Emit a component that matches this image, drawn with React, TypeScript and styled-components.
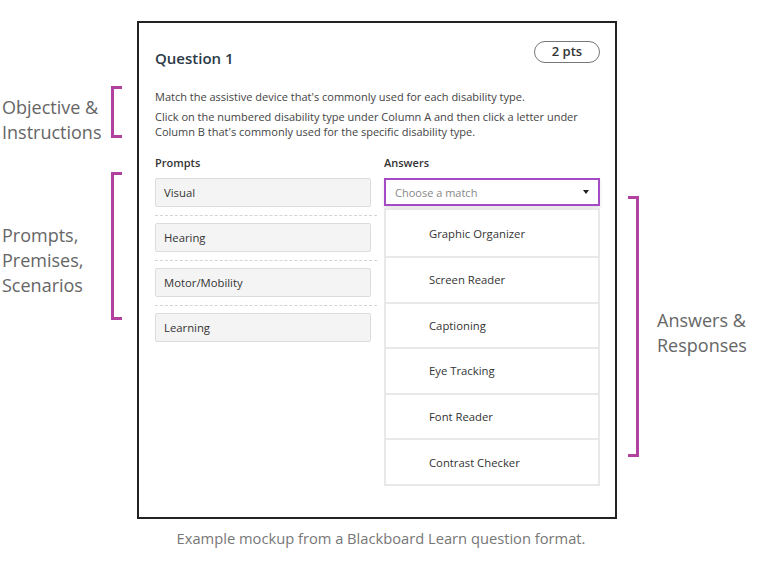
import styled, { createGlobalStyle } from 'styled-components';

const PURPLE = '#b1419f';
const FONT = '"Open Sans", "DejaVu Sans", Arial, sans-serif';

const prompts = ['Visual', 'Hearing', 'Motor/Mobility', 'Learning'];
const answers = [
  'Graphic Organizer',
  'Screen Reader',
  'Captioning',
  'Eye Tracking',
  'Font Reader',
  'Contrast Checker',
];

export default function App() {
  return (
    <>
      <GlobalStyle />
      <Page>
        <Row>
          <SideColumn>
            <Annotation $top={65}>
              <NoteText $offset={9}>
                Objective &amp;
                <br />
                Instructions
              </NoteText>
              <Bracket $height={52} />
            </Annotation>
            <Annotation $top={27}>
              <NoteText $offset={51}>
                Prompts,
                <br />
                Premises,
                <br />
                Scenarios
              </NoteText>
              <Bracket $height={148} />
            </Annotation>
          </SideColumn>

          <Card>
            <Header>
              <Title>Question 1</Title>
              <Points>2 pts</Points>
            </Header>
            <Instructions>
              <p>Match the assistive device that's commonly used for each disability type.</p>
              <p>
                Click on the numbered disability type under Column A and then click a letter under
                Column B that's commonly used for the specific disability type.
              </p>
            </Instructions>
            <Columns>
              <div>
                <ColumnTitle>Prompts</ColumnTitle>
                <PromptList>
                  {prompts.map((p, i) => (
                    <li key={p}>
                      <PromptBox>{p}</PromptBox>
                      {i < prompts.length - 1 && <Divider />}
                    </li>
                  ))}
                </PromptList>
              </div>
              <div>
                <ColumnTitle>Answers</ColumnTitle>
                <Select>
                  <span>Choose a match</span>
                  <Caret />
                </Select>
                <AnswerList>
                  {answers.map((a) => (
                    <AnswerRow key={a}>{a}</AnswerRow>
                  ))}
                </AnswerList>
              </div>
            </Columns>
          </Card>

          <RightColumn>
            <Annotation $top={175}>
              <Bracket $height={261} $flip />
              <NoteText $offset={112}>
                Answers &amp;
                <br />
                Responses
              </NoteText>
            </Annotation>
          </RightColumn>
        </Row>
        <Caption>Example mockup from a Blackboard Learn question format.</Caption>
      </Page>
    </>
  );
}

const GlobalStyle = createGlobalStyle`
  body {
    margin: 0;
    background: #fff;
    font-family: ${FONT};
  }
  p, ul { margin: 0; padding: 0; }
  li { list-style: none; }
`;

const Page = styled.div`
  width: 768px;
  padding-top: 21px;
`;

const Row = styled.div`
  display: flex;
  align-items: flex-start;
`;

const SideColumn = styled.div`
  width: 137px;
  display: flex;
  flex-direction: column;
`;

const RightColumn = styled.div`
  width: 151px;
  padding-left: 11px;
  box-sizing: border-box;
`;

const Annotation = styled.div<{ $top: number }>`
  display: flex;
  align-items: flex-start;
  justify-content: space-between;
  margin-top: ${(p) => p.$top}px;
  padding-left: 2px;
  padding-right: 15px;
  ${RightColumn} & {
    justify-content: flex-start;
    gap: 18px;
    padding: 0;
  }
`;

const NoteText = styled.div<{ $offset: number }>`
  margin-top: ${(p) => p.$offset}px;
  font-size: 18px;
  line-height: 25px;
  color: #666;
  white-space: nowrap;
`;

const Bracket = styled.div<{ $height: number; $flip?: boolean }>`
  flex: none;
  box-sizing: border-box;
  width: 11px;
  height: ${(p) => p.$height}px;
  border: 3px solid ${PURPLE};
  ${(p) => (p.$flip ? 'border-left: none;' : 'border-right: none;')}
`;

const Card = styled.div`
  width: 480px;
  height: 498px;
  box-sizing: border-box;
  border: 2px solid #222;
  padding: 18px 15px 0 16px;
  color: #333;
`;

const Header = styled.div`
  display: flex;
  justify-content: space-between;
  align-items: flex-start;
`;

const Title = styled.h2`
  margin: 7px 0 0;
  font-size: 15px;
  line-height: 20px;
  font-weight: 600;
  color: #2b3947;
`;

const Points = styled.div`
  width: 66px;
  height: 22px;
  box-sizing: border-box;
  border: 1px solid #777;
  border-radius: 11px;
  font-size: 13px;
  font-weight: 600;
  line-height: 18px;
  text-align: center;
  color: #333;
`;

const Instructions = styled.div`
  margin-top: 21px;
  display: flex;
  flex-direction: column;
  gap: 5px;
  font-size: 11px;
  line-height: 15px;
  color: #444;
`;

const Columns = styled.div`
  margin-top: 16px;
  display: grid;
  grid-template-columns: 222px 216px;
  gap: 7px;
`;

const ColumnTitle = styled.h3`
  margin: 0 0 8px;
  font-size: 11px;
  line-height: 15px;
  font-weight: 600;
  color: #333;
`;

const PromptList = styled.ul``;

const PromptBox = styled.div`
  width: 216px;
  height: 29px;
  box-sizing: border-box;
  background: #f4f4f4;
  border: 1px solid #dcdcdc;
  border-radius: 2px;
  padding-left: 8px;
  display: flex;
  align-items: center;
  font-size: 11.3px;
  color: #333;
`;

const Divider = styled.div`
  margin: 8px 0 7px;
  border-top: 1px dashed #d4d4d4;
`;

const Select = styled.div`
  height: 28px;
  box-sizing: border-box;
  border: 2px solid #a64bc6;
  padding: 0 9px 0 9px;
  display: flex;
  align-items: center;
  justify-content: space-between;
  font-size: 11px;
  color: #888;
  box-shadow: 0 2px 3px rgba(0, 0, 0, 0.12);
`;

const Caret = styled.span`
  width: 0;
  height: 0;
  border-left: 3px solid transparent;
  border-right: 3px solid transparent;
  border-top: 4px solid #222;
`;

const AnswerList = styled.ul`
  margin-top: 2px;
  border: 2px solid #e8e8e8;
  border-bottom: none;
`;

const AnswerRow = styled.li`
  height: 43.6px;
  border-bottom: 2px solid #e8e8e8;
  padding-left: 43px;
  display: flex;
  align-items: center;
  font-size: 11.3px;
  color: #333;
  &:first-child {
    height: 46px;
  }
`;

const Caption = styled.p`
  margin-top: 9px;
  width: 488px;
  margin-left: 137px;
  font-size: 14.7px;
  line-height: 20px;
  text-align: center;
  color: #777;
`;
